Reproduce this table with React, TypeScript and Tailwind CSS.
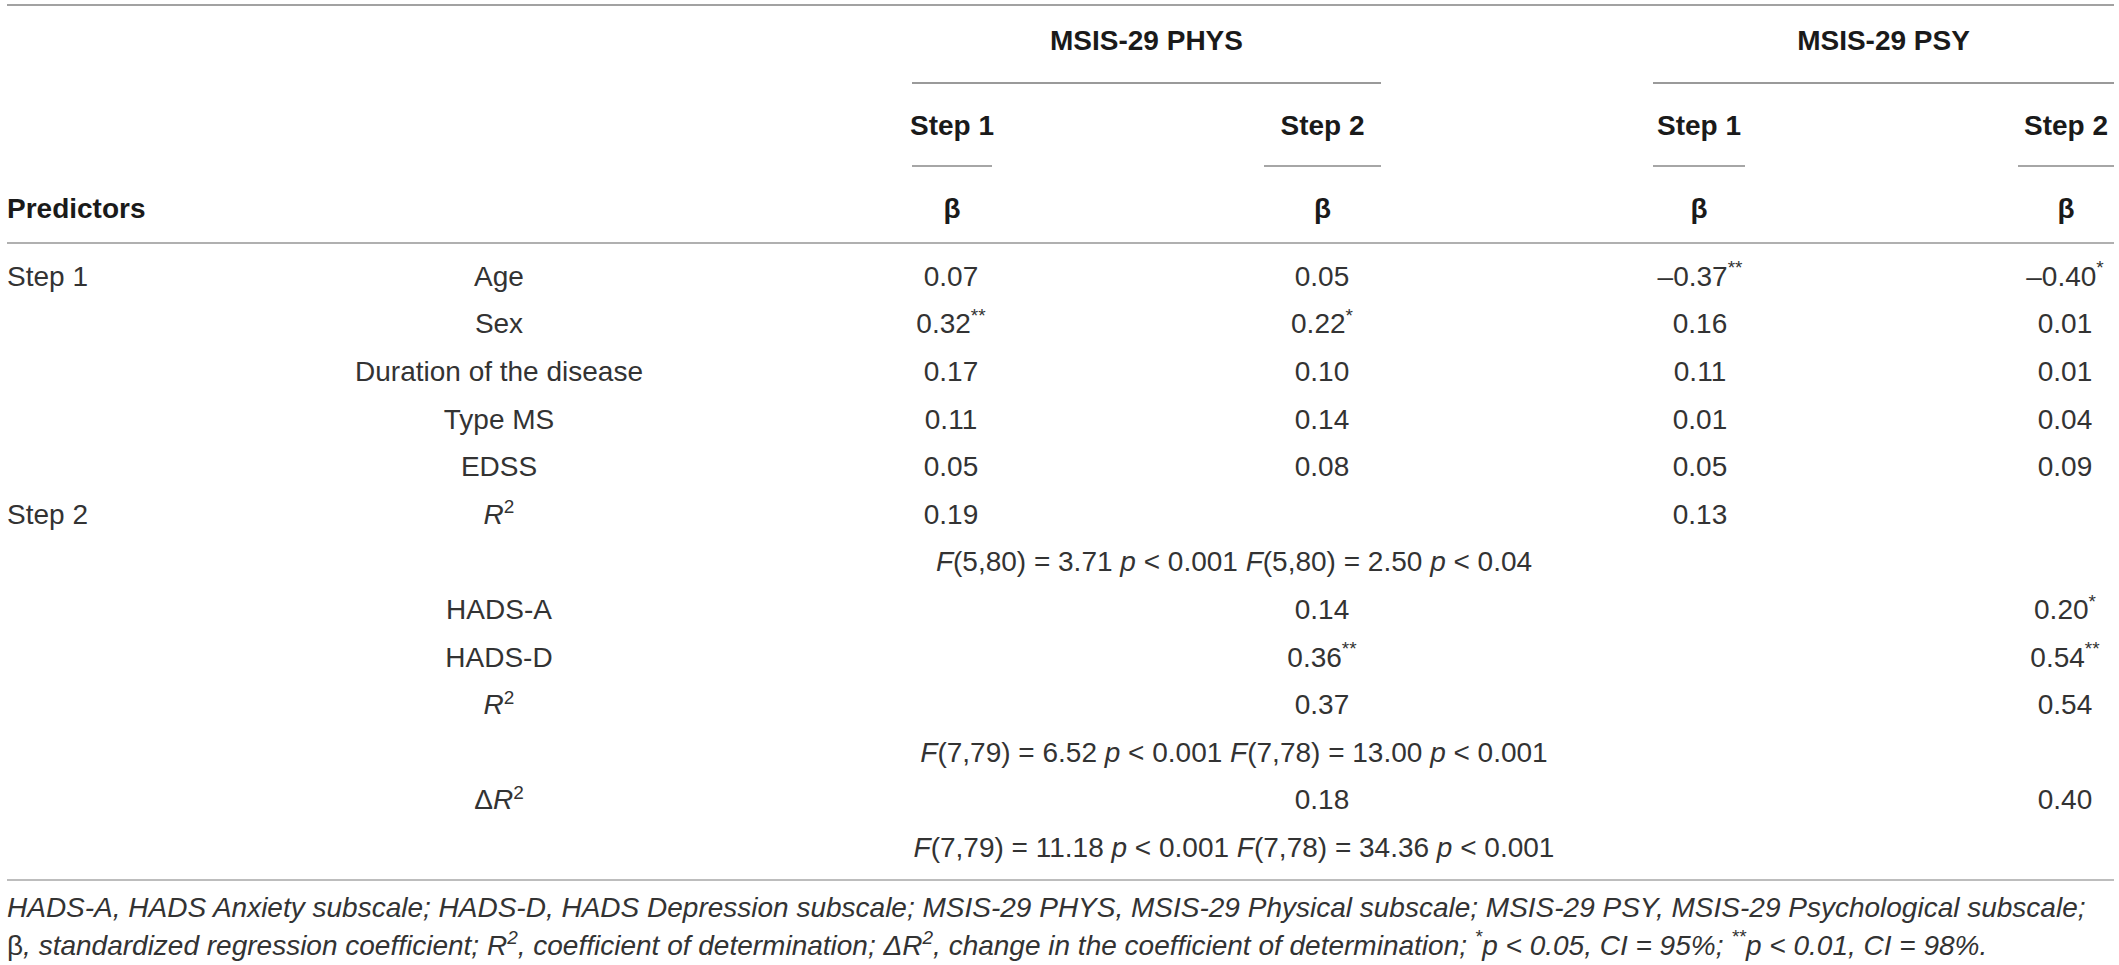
import type { ReactNode } from 'react';

const cols = 'grid grid-cols-[243px_498px_406px_336px_420px_204px]';

function Stars({ n }: { n: number }) {
  return <sup className="text-[19px] top-[-0.6em]">{n === 2 ? '**' : '*'}</sup>;
}

function V({ v, s = 0 }: { v: string; s?: number }) {
  return (
    <span>
      {v}
      {s > 0 && <Stars n={s} />}
    </span>
  );
}

function R2({ delta }: { delta?: boolean }) {
  return (
    <span>
      {delta && 'Δ'}
      <i>R</i>
      <sup className="text-[19px] top-[-0.55em]">2</sup>
    </span>
  );
}

function Cell({ children, className = '' }: { children?: ReactNode; className?: string }) {
  return <div className={`flex justify-center whitespace-nowrap ${className}`}>{children}</div>;
}

type Row = { step?: string; name?: ReactNode; v?: (ReactNode | null)[]; f?: ReactNode };

const rows: Row[] = [
  { step: 'Step 1', name: 'Age', v: [<V v="0.07" />, <V v="0.05" />, <V v="–0.37" s={2} />, <V v="–0.40" s={1} />] },
  { name: 'Sex', v: [<V v="0.32" s={2} />, <V v="0.22" s={1} />, <V v="0.16" />, <V v="0.01" />] },
  { name: 'Duration of the disease', v: [<V v="0.17" />, <V v="0.10" />, <V v="0.11" />, <V v="0.01" />] },
  { name: 'Type MS', v: [<V v="0.11" />, <V v="0.14" />, <V v="0.01" />, <V v="0.04" />] },
  { name: 'EDSS', v: [<V v="0.05" />, <V v="0.08" />, <V v="0.05" />, <V v="0.09" />] },
  { step: 'Step 2', name: <R2 />, v: [<V v="0.19" />, null, <V v="0.13" />, null] },
  {
    f: (
      <span>
        <i>F</i>(5,80) = 3.71 <i>p</i> &lt; 0.001 <i>F</i>(5,80) = 2.50 <i>p</i> &lt; 0.04
      </span>
    ),
  },
  { name: 'HADS-A', v: [null, <V v="0.14" />, null, <V v="0.20" s={1} />] },
  { name: 'HADS-D', v: [null, <V v="0.36" s={2} />, null, <V v="0.54" s={2} />] },
  { name: <R2 />, v: [null, <V v="0.37" />, null, <V v="0.54" />] },
  {
    f: (
      <span>
        <i>F</i>(7,79) = 6.52 <i>p</i> &lt; 0.001 <i>F</i>(7,78) = 13.00 <i>p</i> &lt; 0.001
      </span>
    ),
  },
  { name: <R2 delta />, v: [null, <V v="0.18" />, null, <V v="0.40" />] },
  {
    f: (
      <span>
        <i>F</i>(7,79) = 11.18 <i>p</i> &lt; 0.001 <i>F</i>(7,78) = 34.36 <i>p</i> &lt; 0.001
      </span>
    ),
  },
];

export default function App() {
  return (
    <div className="min-h-screen bg-white font-['Liberation_Sans',Arial,sans-serif] text-[28px] text-[#333333]">
      <div className="ml-[7px] w-[2107px] pt-[4px]">
        {/* header */}
        <div className="border-t-2 border-[#a2a2a2]">
          <div className={`${cols} font-bold text-[#1a1a1a]`}>
            <div className="col-start-3 col-end-5 pl-[164px] pr-[109px]">
              <div className="border-b-2 border-[#9a9a9a] pt-[18px] pb-[24px] text-center leading-[34px]">MSIS-29 PHYS</div>
            </div>
            <div className="col-start-5 col-end-7 pl-[163px]">
              <div className="border-b-2 border-[#9a9a9a] pt-[18px] pb-[24px] text-center leading-[34px]">MSIS-29 PSY</div>
            </div>
          </div>

          <div className={`${cols} font-bold text-[#1a1a1a] leading-[34px]`}>
            <div className="col-start-3 pl-[164px]">
              <Cell className="w-[80px] border-b-2 border-[#a6a6a6] pt-[25px] pb-[22px]">Step 1</Cell>
            </div>
            <div className="pl-[110px]">
              <Cell className="w-[117px] border-b-2 border-[#a6a6a6] pt-[25px] pb-[22px]">Step 2</Cell>
            </div>
            <div className="pl-[163px]">
              <Cell className="w-[92px] border-b-2 border-[#a6a6a6] pt-[25px] pb-[22px]">Step 1</Cell>
            </div>
            <div className="pl-[108px]">
              <Cell className="w-[96px] border-b-2 border-[#a6a6a6] pt-[25px] pb-[22px]">Step 2</Cell>
            </div>
          </div>

          <div className={`${cols} font-bold text-[#1a1a1a] leading-[34px] border-b-2 border-[#b0b0b0] pt-[25px] pb-[16px]`}>
            <div className="col-span-2">Predictors</div>
            <div className="pl-[164px]">
              <Cell className="w-[80px]">β</Cell>
            </div>
            <div className="pl-[110px]">
              <Cell className="w-[117px]">β</Cell>
            </div>
            <div className="pl-[163px]">
              <Cell className="w-[92px]">β</Cell>
            </div>
            <div className="pl-[108px]">
              <Cell className="w-[96px]">β</Cell>
            </div>
          </div>
        </div>

        {/* body */}
        <div className="pt-[9px] pb-[7px]">
          {rows.map((r, i) => (
            <div key={i} className={`${cols} h-[47.6px] items-center leading-[34px]`}>
              <div>{r.step}</div>
              <Cell>{r.name}</Cell>
              {r.f ? (
                <Cell className="col-start-3 col-end-6 pr-[190px]">{r.f}</Cell>
              ) : (
                <>
                  <Cell>{r.v?.[0]}</Cell>
                  <Cell>{r.v?.[1]}</Cell>
                  <Cell>{r.v?.[2]}</Cell>
                  <Cell className="pl-[106px]">{r.v?.[3]}</Cell>
                </>
              )}
            </div>
          ))}
        </div>

        {/* footnote */}
        <div className="border-t-2 border-[#bdbdbd] pt-[8px] italic leading-[38px]">
          HADS-A, HADS Anxiety subscale; HADS-D, HADS Depression subscale; MSIS-29 PHYS, MSIS-29 Physical subscale; MSIS-29 PSY,
          MSIS-29 Psychological subscale; <span className="not-italic">β</span>, standardized regression coefficient; <R2 />,
          coefficient of determination; <R2 delta />, change in the coefficient of determination;{' '}
          <sup className="text-[19px] top-[-0.6em]">*</sup>p &lt; 0.05, CI = 95%; <sup className="text-[19px] top-[-0.6em]">**</sup>p
          &lt; 0.01, CI = 98%.
        </div>
      </div>
    </div>
  );
}
